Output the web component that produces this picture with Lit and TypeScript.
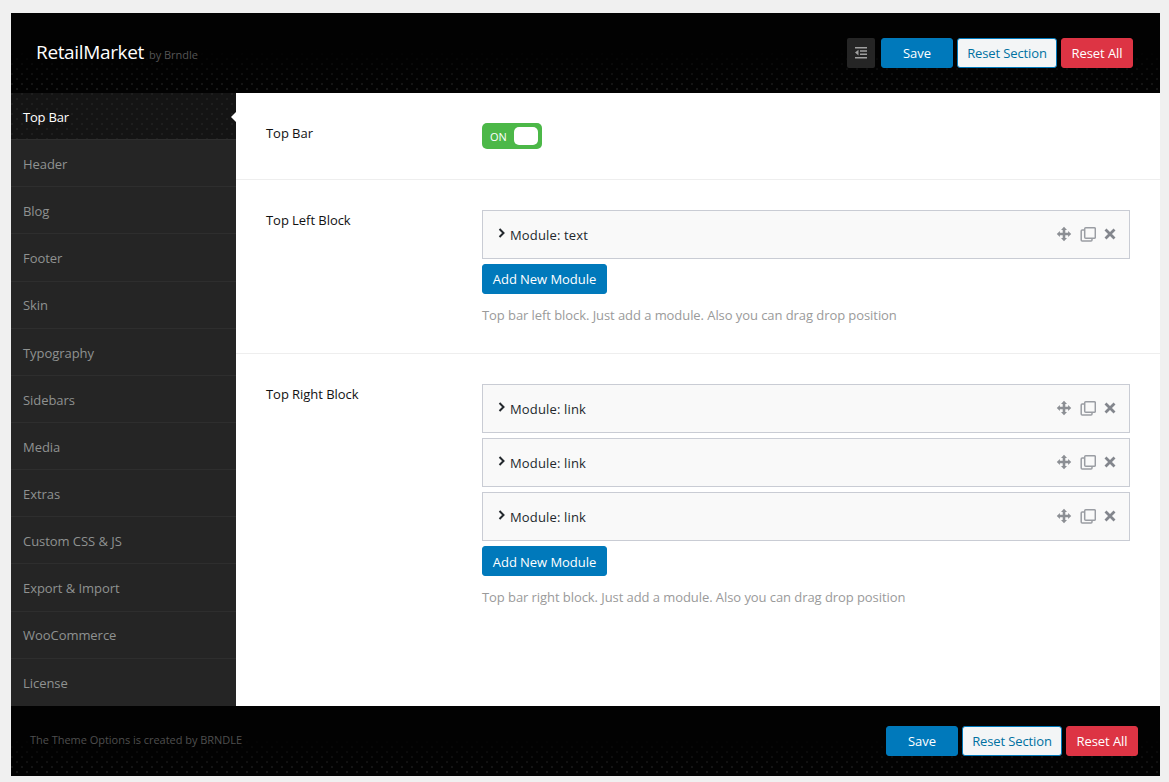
import { LitElement, html, css, svg } from "lit";
import { customElement } from "lit/decorators.js";

const NAV = ["Top Bar","Header","Blog","Footer","Skin","Typography","Sidebars","Media","Extras","Custom CSS & JS","Export & Import","WooCommerce","License"];

const moveIcon = svg`<svg class="ic" width="16" height="16" viewBox="0 0 16 16"><path fill="#8c8f94" d="M8 .8 11 3.9H9.3V6.7H12.1V5L15.2 8 12.1 11V9.3H9.3V12.1H11L8 15.2 5 12.1H6.7V9.3H3.9V11L.8 8 3.9 5V6.7H6.7V3.9H5Z"/></svg>`;
const copyIcon = svg`<svg class="ic" width="16" height="16" viewBox="0 0 16 16" fill="none" stroke="#9a9da3" stroke-width="1.5"><rect x="4.7" y="1.7" width="10.6" height="10.6" rx="1"/><path d="M4 4H2.2a1 1 0 0 0-1 1V14a1 1 0 0 0 1 1H11a1 1 0 0 0 1-1V13"/></svg>`;
const closeIcon = svg`<svg class="ic" width="12" height="12" viewBox="0 0 12 12"><path stroke="#83868d" stroke-width="2.8" d="M1.5 1.5 10.5 10.5M10.5 1.5 1.5 10.5"/></svg>`;

@customElement("app-root")
export class AppRoot extends LitElement {
  static styles = css`
    :host { display: block; box-sizing: border-box; width: 1169px; height: 782px; padding: 13px 9px 6px 11px; background: #f0f0f0; font-family: "Open Sans", "Noto Sans", sans-serif; font-size: 13px; color: #23282d; }
    * { box-sizing: border-box; }
    .frame { display: flex; flex-direction: column; height: 763px; background: #fff; }
    .dots { background-color: #020202; background-image: linear-gradient(to bottom, #020202 45%, rgba(2,2,2,0) 100%), radial-gradient(circle at 1px 1px, #1b1b1b 0.7px, transparent 0.8px), radial-gradient(circle at 6px 6px, #1b1b1b 0.7px, transparent 0.8px); background-size: 100% 100%, 10px 10px, 10px 10px; }
    .head { height: 80px; display: flex; align-items: center; justify-content: space-between; padding: 0 27px 0 25px; flex: none; }
    .brand { display: flex; align-items: baseline; gap: 5px; color: #fff; font-size: 19px; letter-spacing: -0.35px; position: relative; top: -1px; }
    .brand small { font-size: 11px; color: #555; letter-spacing: -0.03px; }
    .actions { display: flex; align-items: center; gap: 4px; }
    .toggle { width: 28px; height: 30px; margin-right: 2px; border-radius: 2px; background: #252525; display: flex; align-items: center; justify-content: center; }
    .btn { height: 30px; border-radius: 3px; border: 1px solid #0079bb; background: #0079bb; color: #fff; font: inherit; font-size: 13px; letter-spacing: -0.05px; display: flex; align-items: center; justify-content: center; white-space: nowrap; padding: 0; }
    .save { width: 72px; }
    .reset { width: 100px; background: #f3f5f6; color: #0071a1; letter-spacing: -0.12px; }
    .all { width: 72px; background: #dd3444; border-color: #dd3444; }
    .body { flex: 1; display: flex; min-height: 0; }
    nav { width: 225px; flex: none; display: grid; grid-template-rows: repeat(13, 47.15px); background: #252525; }
    .item { display: flex; align-items: center; padding: 1.6px 12px 0; color: #8f9291; font-size: 13px; letter-spacing: -0.05px; border-bottom: 1px solid #2e2e2e; }
    .item:last-child { border-bottom: 0; }
    .item.on { position: relative; color: #fff; background-color: #141414; background-image: radial-gradient(circle at 1px 1px, #202020 0.7px, transparent 0.8px), radial-gradient(circle at 6px 6px, #202020 0.7px, transparent 0.8px); background-size: 10px 10px; letter-spacing: -0.2px; }
    .item.on::after { content: ""; position: absolute; right: 0; top: 19px; border: 5px solid transparent; border-right-color: #fff; border-left: 0; }
    main { flex: 1; min-width: 0; display: flex; flex-direction: column; }
    .row { display: flex; padding: 30px 30px 0; border-bottom: 1px solid #eee; }
    .row:last-child { border-bottom: 0; }
    .label { width: 216px; flex: none; color: #111; font-size: 13px; font-weight: 500; letter-spacing: -0.05px; line-height: 20px; }
    .field { flex: 1; min-width: 0; display: flex; flex-direction: column; }
    .r1 { height: 87px; }
    .r2 { height: 174px; }
    .switch { width: 60px; height: 26px; border-radius: 5px; background: #4cb848; display: flex; align-items: center; justify-content: space-between; padding: 0 4px 0 8px; color: #fff; font-size: 11px; }
    .knob { width: 24px; height: 18px; background: #fff; border-radius: 5px; }
    .mods { display: flex; flex-direction: column; gap: 5px; }
    .mod { height: 49px; border: 1px solid #c9ccd4; background: #f9f9f9; display: flex; align-items: center; padding: 0 13px 0 15px; }
    .mod b { font-weight: 500; font-size: 13px; color: #23282d; letter-spacing: 0.15px; margin-left: 4px; }
    .chev { flex: none; position: relative; top: -2px; }
    .tools { margin-left: auto; display: flex; align-items: center; gap: 8px; position: relative; top: -1px; }
    .add { width: 125px; height: 30px; margin-top: 5px; }
    .shifted { padding-top: 1px; }
    .hint { margin-top: 11px; color: #9a9a9a; font-size: 13px; letter-spacing: -0.07px; line-height: 20px; }
    .foot { height: 70px; flex: none; display: flex; align-items: center; justify-content: space-between; padding: 0 22px 0 19px; }
    .foot span { color: #4f4f4f; font-size: 11px; letter-spacing: -0.03px; position: relative; top: -2px; }
  `;

  private buttons() {
    return html`<button class="btn save">Save</button><button class="btn reset">Reset Section</button><button class="btn all">Reset All</button>`;
  }

  private mod(name: string) {
    return html`<div class="mod">
      <svg class="chev" width="8" height="10" viewBox="0 0 8 10"><path d="M1.5 1 5.5 5 1.5 9" fill="none" stroke="#23282d" stroke-width="2"/></svg>
      <b>Module: ${name}</b>
      <div class="tools">${moveIcon}${copyIcon}${closeIcon}</div>
    </div>`;
  }

  render() {
    return html`<div class="frame">
      <header class="head dots">
        <div class="brand">RetailMarket <small>by Brndle</small></div>
        <div class="actions">
          <div class="toggle"><svg width="14" height="13" viewBox="0 0 14 13"><path fill="#a0a0a0" d="M1 0H13V1.6H1ZM6 3.2H13V4.8H6ZM6 6.4H13V8H6ZM1 10H13V11.6H1ZM4.5 2.8V8.4L1 5.6Z"/></svg></div>
          ${this.buttons()}
        </div>
      </header>
      <div class="body">
        <nav>${NAV.map((n, i) => html`<div class="item ${i === 0 ? "on" : ""}">${n}</div>`)}</nav>
        <main>
          <section class="row r1">
            <div class="label">Top Bar</div>
            <div class="field"><div class="switch"><span>ON</span><span class="knob"></span></div></div>
          </section>
          <section class="row r2">
            <div class="label">Top Left Block</div>
            <div class="field">
              <div class="mods">${this.mod("text")}</div>
              <button class="btn add">Add New Module</button>
              <div class="hint">Top bar left block. Just add a module. Also you can drag drop position</div>
            </div>
          </section>
          <section class="row">
            <div class="label">Top Right Block</div>
            <div class="field">
              <div class="mods">${this.mod("link")}${this.mod("link")}${this.mod("link")}</div>
              <button class="btn add shifted">Add New Module</button>
              <div class="hint">Top bar right block. Just add a module. Also you can drag drop position</div>
            </div>
          </section>
        </main>
      </div>
      <footer class="foot dots">
        <span>The Theme Options is created by BRNDLE</span>
        <div class="actions">${this.buttons()}</div>
      </footer>
    </div>`;
  }
}
